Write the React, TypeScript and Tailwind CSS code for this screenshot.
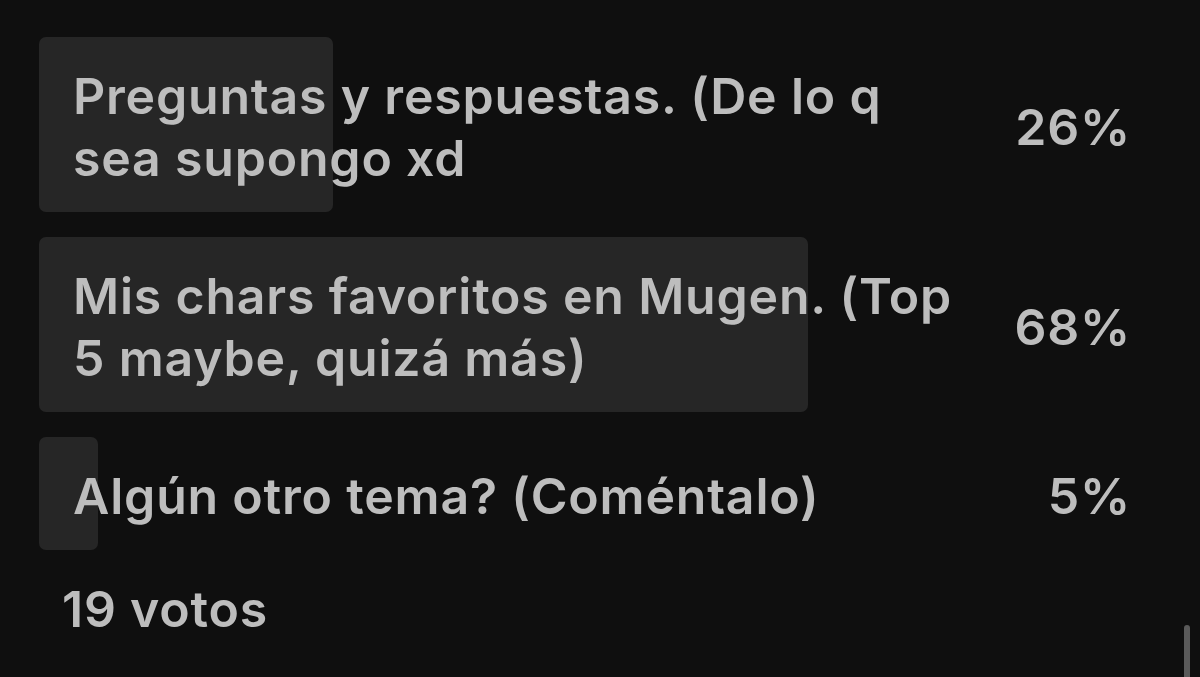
import React from "react";

const rows = [
  { lines: ["Preguntas y respuestas. (De lo q", "sea supongo xd"], pct: "26%", bar: 294, h: 175 },
  { lines: ["Mis chars favoritos en Mugen. (Top", "5 maybe, quizá más)"], pct: "68%", bar: 769, h: 175 },
  { lines: ["Algún otro tema? (Coméntalo)"], pct: "5%", bar: 59, h: 113 },
];

export default function App() {
  return (
    <div
      className="relative w-[1200px] h-[677px] overflow-hidden bg-[#0f0f0f] text-[#bdbdbd]"
      style={{ fontFamily: "Inter, 'Noto Sans', sans-serif" }}
    >
      <div className="flex flex-col gap-[25px] pl-[39px] pr-[39px] pt-[37px]">
        {rows.map((r, i) => (
          <div key={i} className="relative flex items-center justify-between" style={{ height: r.h }}>
            <div
              className="absolute left-0 top-0 h-full rounded-[7px] bg-[#262626]"
              style={{ width: r.bar }}
            />
            <div className="relative pl-[34px] pt-[4px] text-[50px] font-semibold leading-[62px] tracking-[0.8px] whitespace-nowrap">
              {r.lines.map((l, j) => (
                <div key={j}>{l}</div>
              ))}
            </div>
            <div className="relative pr-[30px] pt-[4px] text-[50px] font-semibold leading-[62px] tracking-[0.8px]">{r.pct}</div>
          </div>
        ))}
        <div className="pl-[23px] pt-[3px] text-[50px] font-semibold leading-[62px] tracking-[0.8px]">19 votos</div>
      </div>
      <div className="absolute right-[10px] top-[625px] h-[60px] w-[6px] rounded-full bg-[#5a5a5a]" />
    </div>
  );
}
